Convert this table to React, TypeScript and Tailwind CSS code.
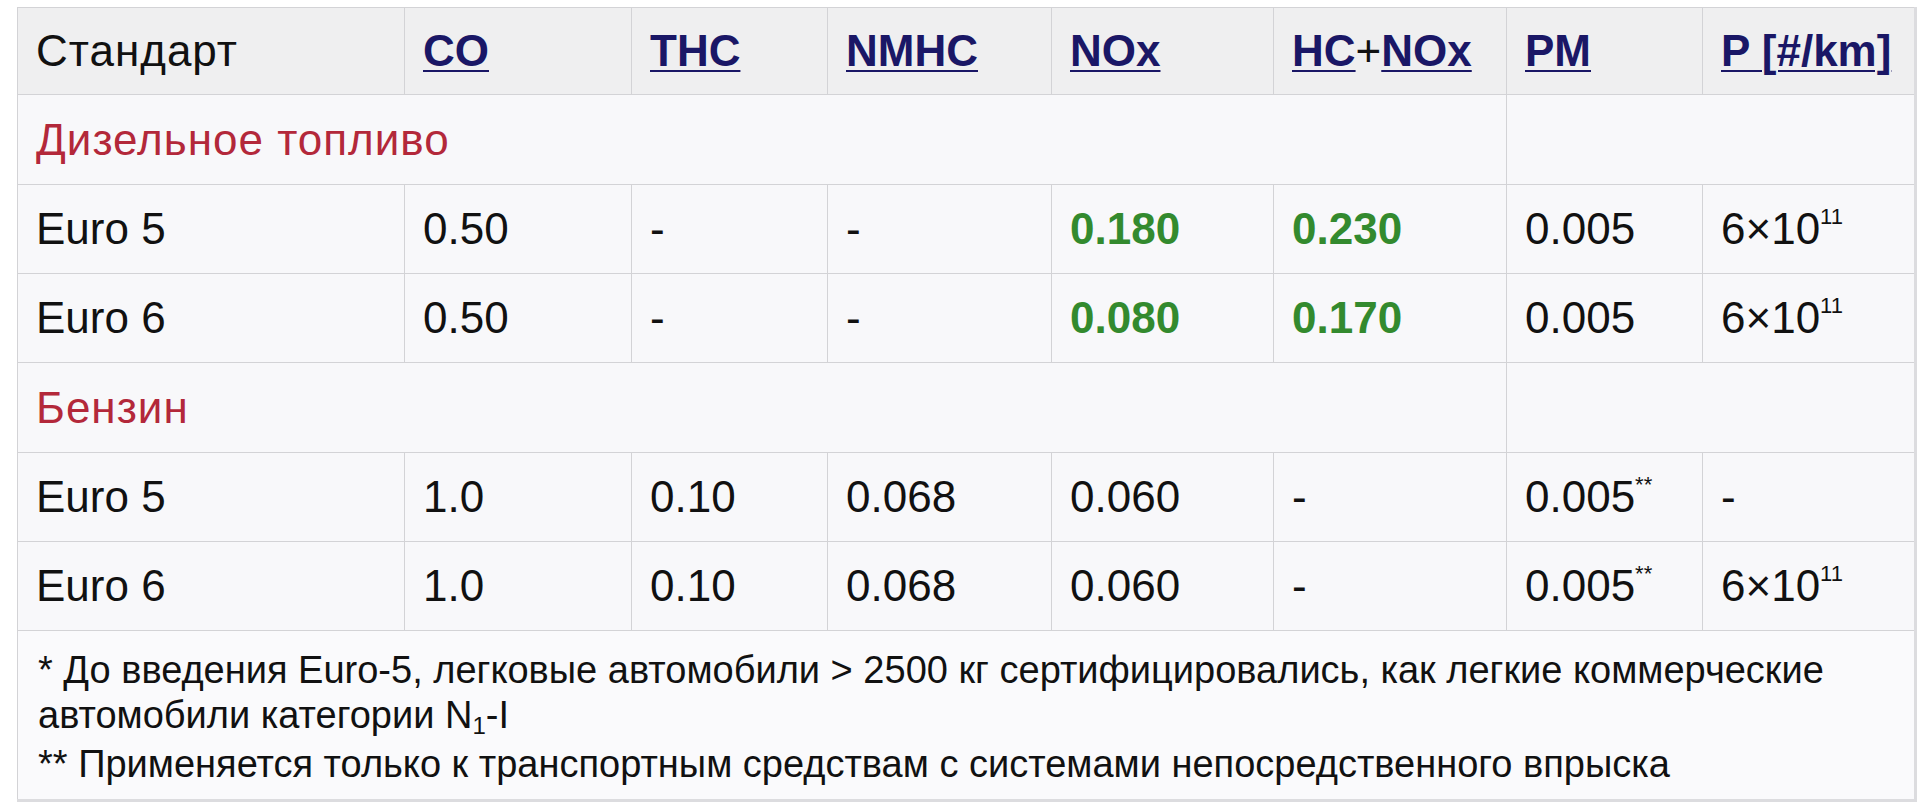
const cols = [387, 227, 196, 224, 222, 233, 196, 213];

type Cell = { text: string; green?: boolean; sup?: string };

const rows: any[] = [
  { kind: 'section', label: 'Дизельное топливо' },
  {
    kind: 'data',
    cells: [
      { text: 'Euro 5' },
      { text: '0.50' },
      { text: '-' },
      { text: '-' },
      { text: '0.180', green: true },
      { text: '0.230', green: true },
      { text: '0.005' },
      { text: '6×10', sup: '11' },
    ],
  },
  {
    kind: 'data',
    cells: [
      { text: 'Euro 6' },
      { text: '0.50' },
      { text: '-' },
      { text: '-' },
      { text: '0.080', green: true },
      { text: '0.170', green: true },
      { text: '0.005' },
      { text: '6×10', sup: '11' },
    ],
  },
  { kind: 'section', label: 'Бензин' },
  {
    kind: 'data',
    cells: [
      { text: 'Euro 5' },
      { text: '1.0' },
      { text: '0.10' },
      { text: '0.068' },
      { text: '0.060' },
      { text: '-' },
      { text: '0.005', sup: '**' },
      { text: '-' },
    ],
  },
  {
    kind: 'data',
    cells: [
      { text: 'Euro 6' },
      { text: '1.0' },
      { text: '0.10' },
      { text: '0.068' },
      { text: '0.060' },
      { text: '-' },
      { text: '0.005', sup: '**' },
      { text: '6×10', sup: '11' },
    ],
  },
];

function Link({ children }: { children: React.ReactNode }) {
  return <a className="font-bold text-[#1a1766] underline decoration-2 underline-offset-[4px]">{children}</a>;
}

function DataCell({ cell }: { cell: Cell }) {
  return (
    <td
      className={
        'border border-[#d3d3d6] px-[18px] align-middle ' +
        (cell.green ? 'font-bold text-[#338a2e]' : 'text-[#111]')
      }
    >
      {cell.text}
      {cell.sup && <sup className="relative -top-[4px] text-[22px] leading-none align-super">{cell.sup}</sup>}
    </td>
  );
}

export default function App() {
  return (
    <div className="min-h-screen bg-white pl-[17px] pt-[7px]" style={{ fontFamily: '"Liberation Sans", Arial, sans-serif' }}>
      <table className="w-[1898px] table-fixed border-collapse border-r-[3px] border-b-[3px] border-[#dcdcdf] bg-[#f8f8fa] text-[44px] leading-none">
        <colgroup>
          {cols.map((w, i) => (
            <col key={i} style={{ width: w }} />
          ))}
        </colgroup>
        <thead>
          <tr className="h-[87px] bg-[#efeff0] text-left">
            <th className="border border-[#d3d3d6] px-[18px] font-normal text-[#111] tracking-[1px]">Стандарт</th>
            <th className="border border-[#d3d3d6] px-[18px] font-normal"><Link>CO</Link></th>
            <th className="border border-[#d3d3d6] px-[18px] font-normal"><Link>THC</Link></th>
            <th className="border border-[#d3d3d6] px-[18px] font-normal"><Link>NMHC</Link></th>
            <th className="border border-[#d3d3d6] px-[18px] font-normal"><Link>NOx</Link></th>
            <th className="border border-[#d3d3d6] px-[18px] font-normal whitespace-nowrap">
              <Link>HC</Link>
              <span className="text-[#111]">+</span>
              <Link>NOx</Link>
            </th>
            <th className="border border-[#d3d3d6] px-[18px] font-normal"><Link>PM</Link></th>
            <th className="border border-[#d3d3d6] px-[18px] font-normal whitespace-nowrap"><Link>P [#/km]</Link></th>
          </tr>
        </thead>
        <tbody>
          {rows.map((r: any, i: number) =>
            r.kind === 'section' ? (
              <tr key={i} className="h-[90px]">
                <td colSpan={6} className="border border-[#d3d3d6] px-[18px] text-[#b3283a] tracking-[1px]">
                  {r.label}
                </td>
                <td colSpan={2} className="border border-[#d3d3d6]" />
              </tr>
            ) : (
              <tr key={i} className="h-[89px]">
                {r.cells.map((c: Cell, j: number) => (
                  <DataCell key={j} cell={c} />
                ))}
              </tr>
            )
          )}
          <tr className="h-[170px] bg-[#fafafc]">
            <td
              colSpan={8}
              className="border border-[#d3d3d6] px-[20px] pt-[4px] align-middle text-[38px] leading-[45px] text-[#111]"
            >
              <div>* До введения Euro-5, легковые автомобили &gt; 2500 кг сертифицировались, как легкие коммерческие</div>
              <div>
                автомобили категории N<sub className="text-[24px]">1</sub>-I
              </div>
              <div className="mt-[4px]">** Применяется только к транспортным средствам с системами непосредственного впрыска</div>
            </td>
          </tr>
        </tbody>
      </table>
    </div>
  );
}
